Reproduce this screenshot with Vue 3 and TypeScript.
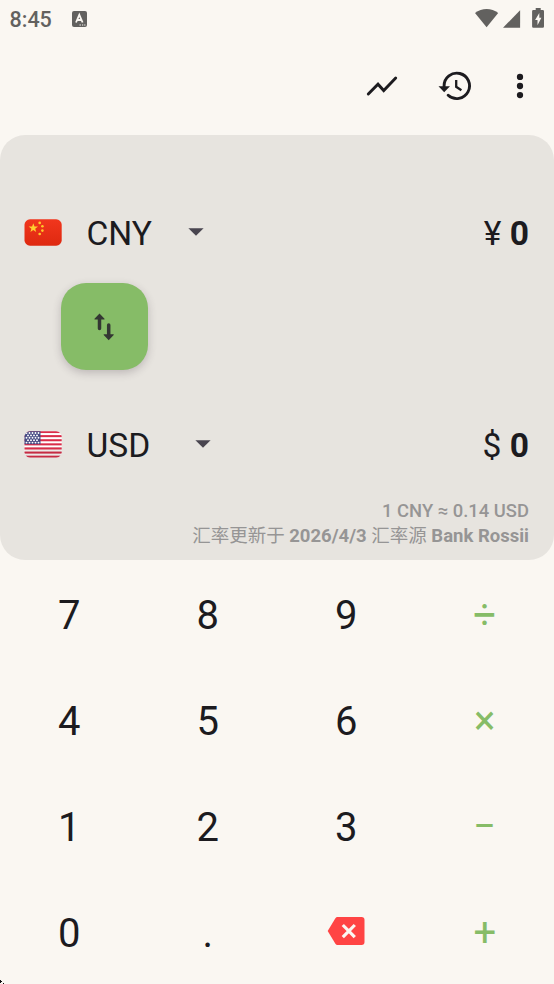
<script setup lang="ts">
interface Key {
  label: string
  kind: 'digit' | 'operator' | 'erase'
}

interface Currency {
  code: string
  symbol: string
  amount: string
}

const from: Currency = { code: 'CNY', symbol: '¥', amount: '0' }
const to: Currency = { code: 'USD', symbol: '$', amount: '0' }

const digit = (label: string): Key => ({ label, kind: 'digit' })
const operator = (label: string): Key => ({ label, kind: 'operator' })

const keys: Key[] = [
  digit('7'), digit('8'), digit('9'), operator('÷'),
  digit('4'), digit('5'), digit('6'), operator('×'),
  digit('1'), digit('2'), digit('3'), operator('−'),
  digit('0'), digit('.'), { label: '', kind: 'erase' }, operator('+'),
]

const stripes = [0, 1, 2, 3, 4, 5, 6]
const stars = [0, 1, 2, 3, 4].flatMap((row) =>
  Array.from({ length: row % 2 ? 4 : 5 }, (_, col) => ({
    x: 2.5 + col * 3 + (row % 2) * 1.5,
    y: 2 + row * 2.4,
  })),
)
</script>

<template>
  <main class="screen">
    <header class="status">
      <span class="time">8:45</span>
      <svg class="badge" width="15" height="16" viewBox="0 0 15 16">
        <rect width="15" height="16" rx="2" fill="#62615f" />
        <path d="M4 11.5 7.3 3.8 10.6 11.5M5.2 9h4.2" fill="none" stroke="#faf7f2" stroke-width="1.8" />
        <path d="M7.5 14h1.4M10 14h1.2M12.2 14h1.2" stroke="#faf7f2" stroke-width="1.2" />
      </svg>
      <svg class="signals" width="70" height="20" viewBox="0 0 70 20">
        <g fill="#62615f">
          <path d="M0 5C6.8-.3 16.4-.3 23.2 5L11.6 19.2Z" />
          <path d="M28 19.8 45.1 2.2V19.8Z" />
          <path d="M60.7 0h5v2h2q1.3 0 1.3 1.3V18.5q0 1.3-1.3 1.3H58.4q-1.3 0-1.3-1.3V3.3Q57.1 2 58.4 2h2.3Z" />
        </g>
        <path d="M64.3 4.9 60.1 12h2.4v5.3L66.4 9.8h-2.1Z" fill="#faf7f2" />
      </svg>
    </header>

    <nav class="toolbar">
      <button class="tool" aria-label="走势">
        <svg width="34" height="34" viewBox="0 0 34 34">
          <path d="M3.3 25 13 15.2 18.7 21.5 30.7 9" fill="none" stroke="#1c1b1f" stroke-width="2.9" stroke-linecap="round" />
        </svg>
      </button>
      <button class="tool history" aria-label="历史">
        <svg width="34" height="34" viewBox="0 0 34 34">
          <path d="M6.1 18V17A12.7 12.7 0 1 1 10.2 26.2" fill="none" stroke="#1c1b1f" stroke-width="2.9" stroke-linecap="round" />
          <path d="M.5 17.3H12L6.2 23.3Z" fill="#1c1b1f" />
          <path d="M18.2 11V17.8L23.4 21.2" fill="none" stroke="#1c1b1f" stroke-width="2.3" />
        </svg>
      </button>
      <button class="tool more" aria-label="更多">
        <svg width="10" height="34" viewBox="0 0 10 34" fill="#1c1b1f">
          <circle cx="5" cy="7.9" r="3.15" />
          <circle cx="5" cy="17" r="3.15" />
          <circle cx="5" cy="26.1" r="3.15" />
        </svg>
      </button>
    </nav>

    <section class="panel">
      <div class="currency">
        <svg class="flag" width="38" height="27" viewBox="0 0 38 27">
          <defs>
            <linearGradient id="cn-red" x2="0" y2="1">
              <stop stop-color="#f1361d" />
              <stop offset="1" stop-color="#de2910" />
            </linearGradient>
          </defs>
          <rect x=".5" y=".3" width="37.2" height="26.4" rx="5.5" fill="url(#cn-red)" />
          <path d="M9.3 4.2 10.5 7.5 14 7.6 11.2 9.7 12.2 13.1 9.3 11.1 6.4 13.1 7.4 9.7 4.6 7.6 8.1 7.5Z" fill="#ffd02f" />
          <g fill="#ffc92b">
            <circle cx="15.7" cy="3.9" r="1.35" />
            <circle cx="18.4" cy="7.3" r="1.3" />
            <circle cx="18.4" cy="11.6" r="1.3" />
            <circle cx="15.7" cy="15" r="1.35" />
          </g>
        </svg>
        <span class="code">{{ from.code }}</span>
        <svg class="caret" width="16" height="8" viewBox="0 0 16 8"><path d="M.4 .2H15.6L8 7.7Z" fill="#49454f" /></svg>
        <span class="amount">{{ from.symbol }} <b>{{ from.amount }}</b></span>
      </div>

      <button class="swap" aria-label="交换">
        <svg width="20" height="28" viewBox="0 0 20 28">
          <path d="M5.5 15.5V4M14.7 12V23.5" fill="none" stroke="#343733" stroke-width="3.5" stroke-linecap="round" />
          <path d="M5.5 .4 10.5 5.7V6.5H.5V5.7ZM14.7 27.3 9.7 22V21.2H19.7V22Z" fill="#343733" />
        </svg>
      </button>

      <div class="currency second">
        <svg class="flag" width="38" height="27" viewBox="0 0 38 27">
          <defs>
            <clipPath id="us-shape"><rect x=".5" y=".3" width="37.2" height="26.4" rx="5.5" /></clipPath>
          </defs>
          <g clip-path="url(#us-shape)">
            <rect width="38" height="27" fill="#fff" />
            <rect y="16" width="38" height="11" fill="#ebe9e7" />
            <rect v-for="n in stripes" :key="n" x="0" :y="n * 4.11" width="38" height="2.05" :fill="n < 5 ? '#d92d49' : '#c62b43'" />
            <rect width="16.5" height="13.2" fill="#464a83" />
            <circle v-for="(s, i) in stars" :key="i" :cx="s.x" :cy="s.y" r=".95" fill="#fff" />
          </g>
        </svg>
        <span class="code">{{ to.code }}</span>
        <svg class="caret" width="16" height="8" viewBox="0 0 16 8"><path d="M.4 .2H15.6L8 7.7Z" fill="#49454f" /></svg>
        <span class="amount">{{ to.symbol }} <b>{{ to.amount }}</b></span>
      </div>

      <p class="rate">1 CNY ≈ 0.14 USD</p>
      <p class="source">汇率更新于 <b>2026/4/3</b> 汇率源 <b>Bank Rossii</b></p>
    </section>

    <section class="keypad">
      <button v-for="(key, i) in keys" :key="i" class="key" :class="key.kind">
        <svg v-if="key.kind === 'erase'" width="38" height="28" viewBox="0 0 38 28">
          <path d="M10.5 0H34.5Q37.5 0 37.5 3V25Q37.5 28 34.5 28H10.5Q9.2 28 8.4 26.8L.7 14 8.4 1.2Q9.2 0 10.5 0Z" fill="#ff4444" />
          <path d="M15.8 8 27.8 20.2M27.8 8 15.8 20.2" stroke="#faf7f2" stroke-width="3.2" />
        </svg>
        <span v-else>{{ key.label }}</span>
      </button>
    </section>

    <svg class="corner" width="4" height="4" viewBox="0 0 4 4"><path d="M0 0h1v1h1v1H1v1H0ZM3 3h1v1H3Z" fill="#111" /></svg>
  </main>
</template>

<style>
body {
  margin: 0;
  background: #faf7f2;
}
</style>

<style scoped>
.screen {
  position: relative;
  display: flex;
  flex-direction: column;
  width: 554px;
  height: 984px;
  overflow: hidden;
  background: #faf7f2;
  color: #1c1b1f;
  font-family: Roboto, 'Noto Sans CJK SC', sans-serif;
}

button {
  display: flex;
  align-items: center;
  justify-content: center;
  padding: 0;
  border: 0;
  background: none;
  color: inherit;
  font: inherit;
}

svg {
  display: block;
  flex: none;
}

.status {
  display: flex;
  align-items: center;
  height: 38px;
  padding: 0 9px 0 9.5px;
}

.time {
  width: 62.5px;
  color: #62615f;
  font-size: 21.5px;
  font-weight: 500;
}

.badge {
  margin-top: -1px;
}

.signals {
  margin: -2px 0 0 auto;
}

.toolbar {
  display: flex;
  align-items: center;
  justify-content: flex-end;
  box-sizing: border-box;
  height: 97px;
  padding: 0 29px 1px 0;
}

.history {
  margin: 0 1px 0 39px;
}

.more {
  margin-left: 42px;
}

.panel {
  box-sizing: border-box;
  height: 424.5px;
  padding: 72px 25px 0 24px;
  border-radius: 25px;
  background: #e7e4df;
}

.currency {
  display: flex;
  align-items: center;
  height: 50px;
  font-size: 33.6px;
}

.code {
  width: 66px;
  padding-top: 2px;
  margin-left: 24.5px;
}

.caret {
  margin-left: 35.5px;
}

.second .caret {
  margin-left: 42.5px;
}

.amount {
  padding-top: 2px;
  margin-left: auto;
}

.swap {
  width: 86.5px;
  height: 86.5px;
  padding: 1px 1px 0 0;
  margin: 26px 0 49.5px 37.3px;
  border-radius: 25px;
  background: #86bc67;
  box-shadow: 0 3px 8px rgb(60 45 60 / 24%);
}

.rate,
.source {
  margin: 0;
  color: #969595;
  font-size: 18.5px;
  line-height: 25px;
  text-align: right;
  white-space: nowrap;
}

.rate {
  margin-top: 29px;
  font-size: 18.4px;
  font-weight: 500;
}

.source {
  padding-top: 1px;
}

.keypad {
  display: grid;
  flex: 1;
  grid-template-columns: repeat(4, 1fr);
  grid-template-rows: repeat(4, 106px);
}

.key {
  font-size: 40px;
}

.key span {
  padding-top: 5px;
}

.key.operator span {
  padding-top: 4px;
}

.operator {
  color: #86bc67;
}

.corner {
  position: absolute;
  bottom: 0;
  left: 0;
}
</style>
